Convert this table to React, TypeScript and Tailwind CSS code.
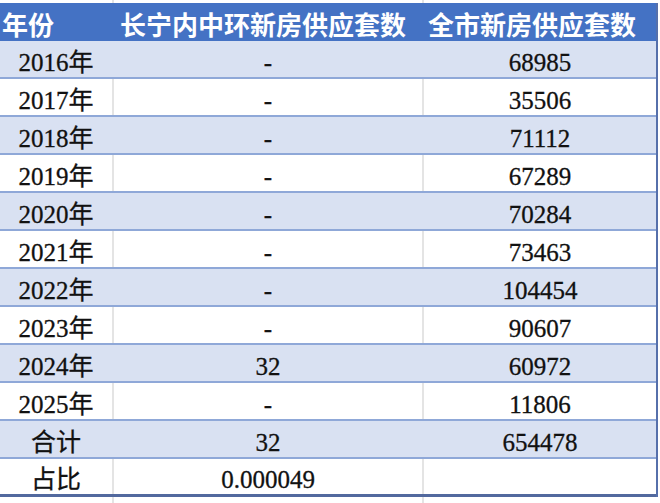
import React from "react";

const rows: [string, string, string][] = [
  ["2016年", "-", "68985"],
  ["2017年", "-", "35506"],
  ["2018年", "-", "71112"],
  ["2019年", "-", "67289"],
  ["2020年", "-", "70284"],
  ["2021年", "-", "73463"],
  ["2022年", "-", "104454"],
  ["2023年", "-", "90607"],
  ["2024年", "32", "60972"],
  ["2025年", "-", "11806"],
  ["合计", "32", "654478"],
  ["占比", "0.000049", ""],
];

export default function App() {
  return (
    <div className="w-[660px] h-[503px] bg-white overflow-hidden">
      <div className="h-[3px] grid grid-cols-[112px_310px_234px]">
        <div />
        <div className="border-l-2 border-[#e4e4e4]" />
        <div className="border-l-2 border-[#e4e4e4]" />
      </div>
      <div className="w-[658px] border-r-2 border-[#5670ab]">
        <div className="h-[38px] grid grid-cols-[112px_310px_234px] bg-[#4472c4] text-white font-bold text-[26px] leading-none font-['Noto_Sans_CJK_SC',sans-serif]">
          <div className="flex items-center pl-[2px] pt-[3px]">年份</div>
          <div className="flex items-center pl-[8px] pt-[3px]">长宁内中环新房供应套数</div>
          <div className="flex items-center pl-[6px] pt-[3px]">全市新房供应套数</div>
        </div>
        {rows.map((r, i) => {
          const band = i % 2 === 0;
          const last = i === rows.length - 1;
          return (
            <div
              key={i}
              className={`h-[38px] grid grid-cols-[112px_310px_234px] text-[25px] leading-none text-[#111111] [-webkit-text-stroke:0.3px_#111111] font-['Liberation_Serif','Times_New_Roman','Noto_Sans_CJK_SC',serif] ${
                band ? "bg-[#d9e1f2]" : "bg-white"
              } ${last ? "border-b-[3px] border-[#52699e]" : "border-b-2 border-[#8fa8d8]"}`}
            >
              <div className="flex items-center justify-center pt-[6px]">{r[0]}</div>
              <div
                className={`flex items-center justify-center pt-[6px] border-l-2 ${
                  band ? "border-transparent" : "border-[#e4e4e4]"
                }`}
              >
                {r[1]}
              </div>
              <div
                className={`flex items-center justify-center pt-[6px] border-l-2 ${
                  band ? "border-transparent" : "border-[#e4e4e4]"
                }`}
              >
                {r[2]}
              </div>
            </div>
          );
        })}
      </div>
      <div className="h-[6px] grid grid-cols-[112px_310px_234px]">
        <div />
        <div className="border-l-2 border-[#e4e4e4]" />
        <div className="border-l-2 border-[#e4e4e4]" />
      </div>
    </div>
  );
}
